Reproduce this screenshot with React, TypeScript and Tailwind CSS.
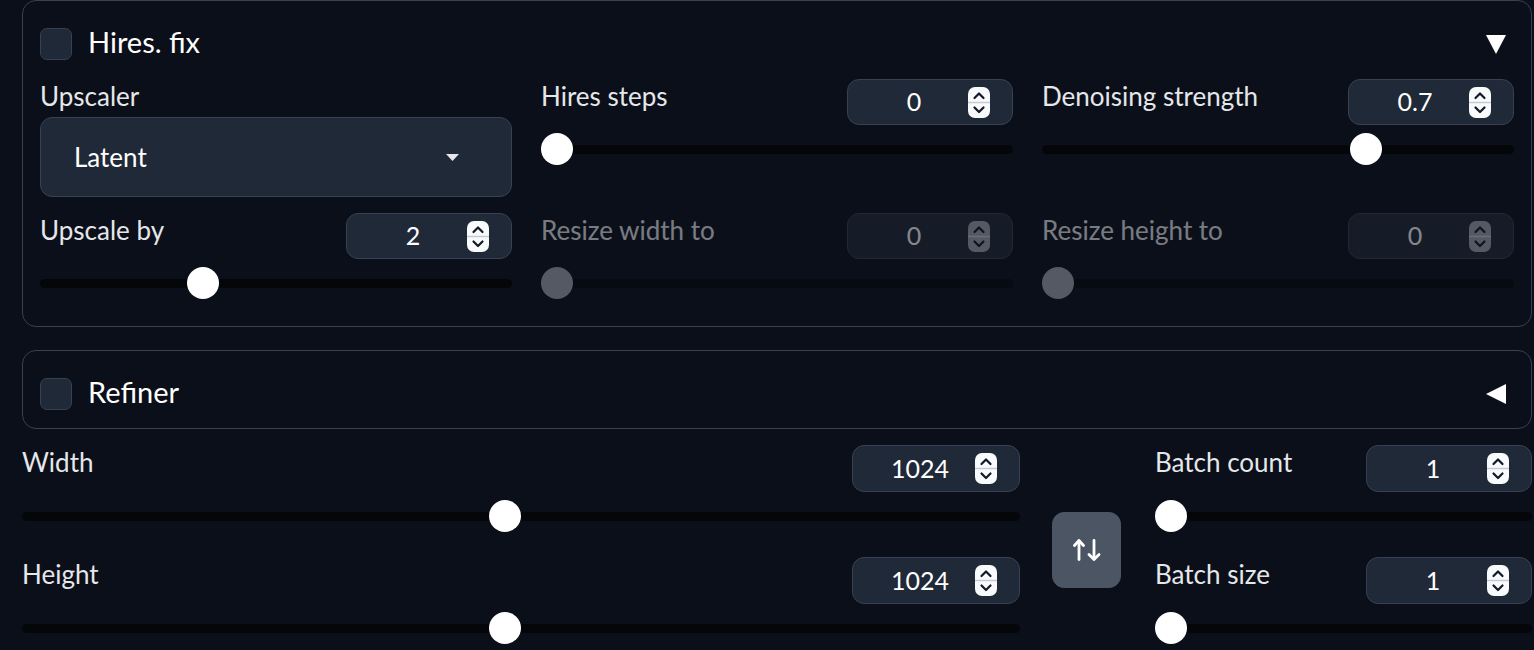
import React from "react";

type FieldProps = {
  label: string;
  value: string;
  pct: number;
  disabled?: boolean;
  tall?: boolean;
};

function Spinner({ disabled }: { disabled?: boolean }) {
  return (
    <svg width="22" height="31" viewBox="0 0 22 31" className="shrink-0">
      <rect x="0" y="0" width="22" height="31" rx="7" fill={disabled ? "#9ca3af" : "#f9fafb"} />
      <line x1="0" y1="15.5" x2="22" y2="15.5" stroke="#c7cad0" strokeWidth="1.5" />
      <polyline points="6.5,11 11,6.5 15.5,11" fill="none" stroke="#111827" strokeWidth="2.2" strokeLinecap="round" strokeLinejoin="round" />
      <polyline points="6.5,20.5 11,25 15.5,20.5" fill="none" stroke="#111827" strokeWidth="2.2" strokeLinecap="round" strokeLinejoin="round" />
    </svg>
  );
}

function NumberBox({ value, disabled, wide }: { value: string; disabled?: boolean; wide?: boolean }) {
  return (
    <div
      className={`flex items-center h-full rounded-[12px] border border-[#374151] bg-[#1f2937] pl-3 pr-[22px] ${
        wide ? "w-[168px]" : "w-[166px]"
      }`}
    >
      <span className="flex-1 text-center text-[25px] text-white">{value}</span>
      <Spinner disabled={disabled} />
    </div>
  );
}

function Slider({ pct, disabled }: { pct: number; disabled?: boolean }) {
  return (
    <div className="relative h-[9px] w-full rounded-full bg-[#04060a]">
      <div
        className={`absolute top-1/2 h-8 w-8 -translate-y-1/2 rounded-full ${disabled ? "bg-[#9ca3af]" : "bg-white"}`}
        style={{ left: `calc(${pct} * (100% - 32px))` }}
      />
    </div>
  );
}

function SliderField({ label, value, pct, disabled, tall }: FieldProps) {
  return (
    <div className={disabled ? "opacity-50" : ""}>
      <div className={`flex items-start justify-between ${tall ? "h-[47px]" : "h-[46px]"}`}>
        <span className="text-[26px] leading-[34px] text-[#e5e7eb]">{label}</span>
        <NumberBox value={value} disabled={disabled} wide={tall && value === "1024"} />
      </div>
      <div className="flex h-12 items-center">
        <Slider pct={pct} disabled={disabled} />
      </div>
    </div>
  );
}

function Checkbox() {
  return <div className="h-8 w-8 shrink-0 rounded-[7px] border-[1.5px] border-[#374151] bg-[#1f2937]" />;
}

function Caret({ open }: { open: boolean }) {
  return open ? (
    <svg width="20" height="19" viewBox="0 0 20 19">
      <polygon points="0,0 20,0 10,19" fill="#ffffff" strokeLinejoin="round" />
    </svg>
  ) : (
    <svg width="20" height="20" viewBox="0 0 20 20">
      <polygon points="20,0 20,20 0,10" fill="#ffffff" />
    </svg>
  );
}

function PanelHeader({ title, open }: { title: string; open: boolean }) {
  return (
    <div className="flex h-8 items-center">
      <Checkbox />
      <span className="ml-[16px] pb-[5px] text-[29px] text-white">{title}</span>
      <div className="ml-auto mr-[8px]">
        <Caret open={open} />
      </div>
    </div>
  );
}

export default function App() {
  return (
    <div className="h-[650px] w-[1534px] overflow-hidden bg-[#0b0f19] pl-[22px] font-['Lato','Noto_Sans',sans-serif]">
      {/* Hires. fix */}
      <section className="w-[1510px] rounded-[14px] border border-[#374151] pb-[19px] pl-[17px] pr-[17px] pt-[27px]">
        <PanelHeader title="Hires. fix" open />
        <div className="mt-[19px] grid grid-cols-3 gap-x-[29px] gap-y-4">
          <div>
            <div className="text-[26px] leading-[34px] text-[#e5e7eb]">Upscaler</div>
            <div className="mt-1 flex h-20 items-center rounded-[12px] border border-[#374151] bg-[#1f2937] pl-[33px] pr-[52px]">
              <span className="flex-1 text-[26px] text-white">Latent</span>
              <svg width="13" height="7" viewBox="0 0 13 7">
                <polygon points="0,0 13,0 6.5,7" fill="#e5e7eb" />
              </svg>
            </div>
          </div>
          <SliderField label="Hires steps" value="0" pct={0} />
          <SliderField label="Denoising strength" value="0.7" pct={0.7} />
          <SliderField label="Upscale by" value="2" pct={1 / 3} />
          <SliderField label="Resize width to" value="0" pct={0} disabled />
          <SliderField label="Resize height to" value="0" pct={0} disabled />
        </div>
      </section>

      {/* Refiner */}
      <section className="mt-[23px] w-[1510px] rounded-[14px] border border-[#374151] pb-[18px] pl-[17px] pr-[17px] pt-[27px]">
        <PanelHeader title="Refiner" open={false} />
      </section>

      {/* Size / batch */}
      <div className="mt-4 flex items-start">
        <div className="flex w-[998px] flex-col gap-[17px]">
          <SliderField label="Width" value="1024" pct={0.4839} tall />
          <SliderField label="Height" value="1024" pct={0.4839} tall />
        </div>
        <div className="ml-8 mt-[67px] flex h-[76px] w-[69px] items-center justify-center rounded-[12px] border border-[#4b5563] bg-[#4b5563]">
          <svg width="28" height="22" viewBox="0 0 28 22">
            <g fill="none" stroke="#ffffff" strokeWidth="2.8" strokeLinecap="round" strokeLinejoin="round">
              <line x1="6" y1="2" x2="6" y2="20.5" />
              <polyline points="1.5,6.5 6,1.5 10.5,6.5" />
              <line x1="21" y1="1.5" x2="21" y2="20" />
              <polyline points="16,15.5 21,20.5 26,15.5" />
            </g>
          </svg>
        </div>
        <div className="ml-[34px] flex w-[377px] flex-col gap-[17px]">
          <SliderField label="Batch count" value="1" pct={0} tall />
          <SliderField label="Batch size" value="1" pct={0} tall />
        </div>
      </div>
    </div>
  );
}
